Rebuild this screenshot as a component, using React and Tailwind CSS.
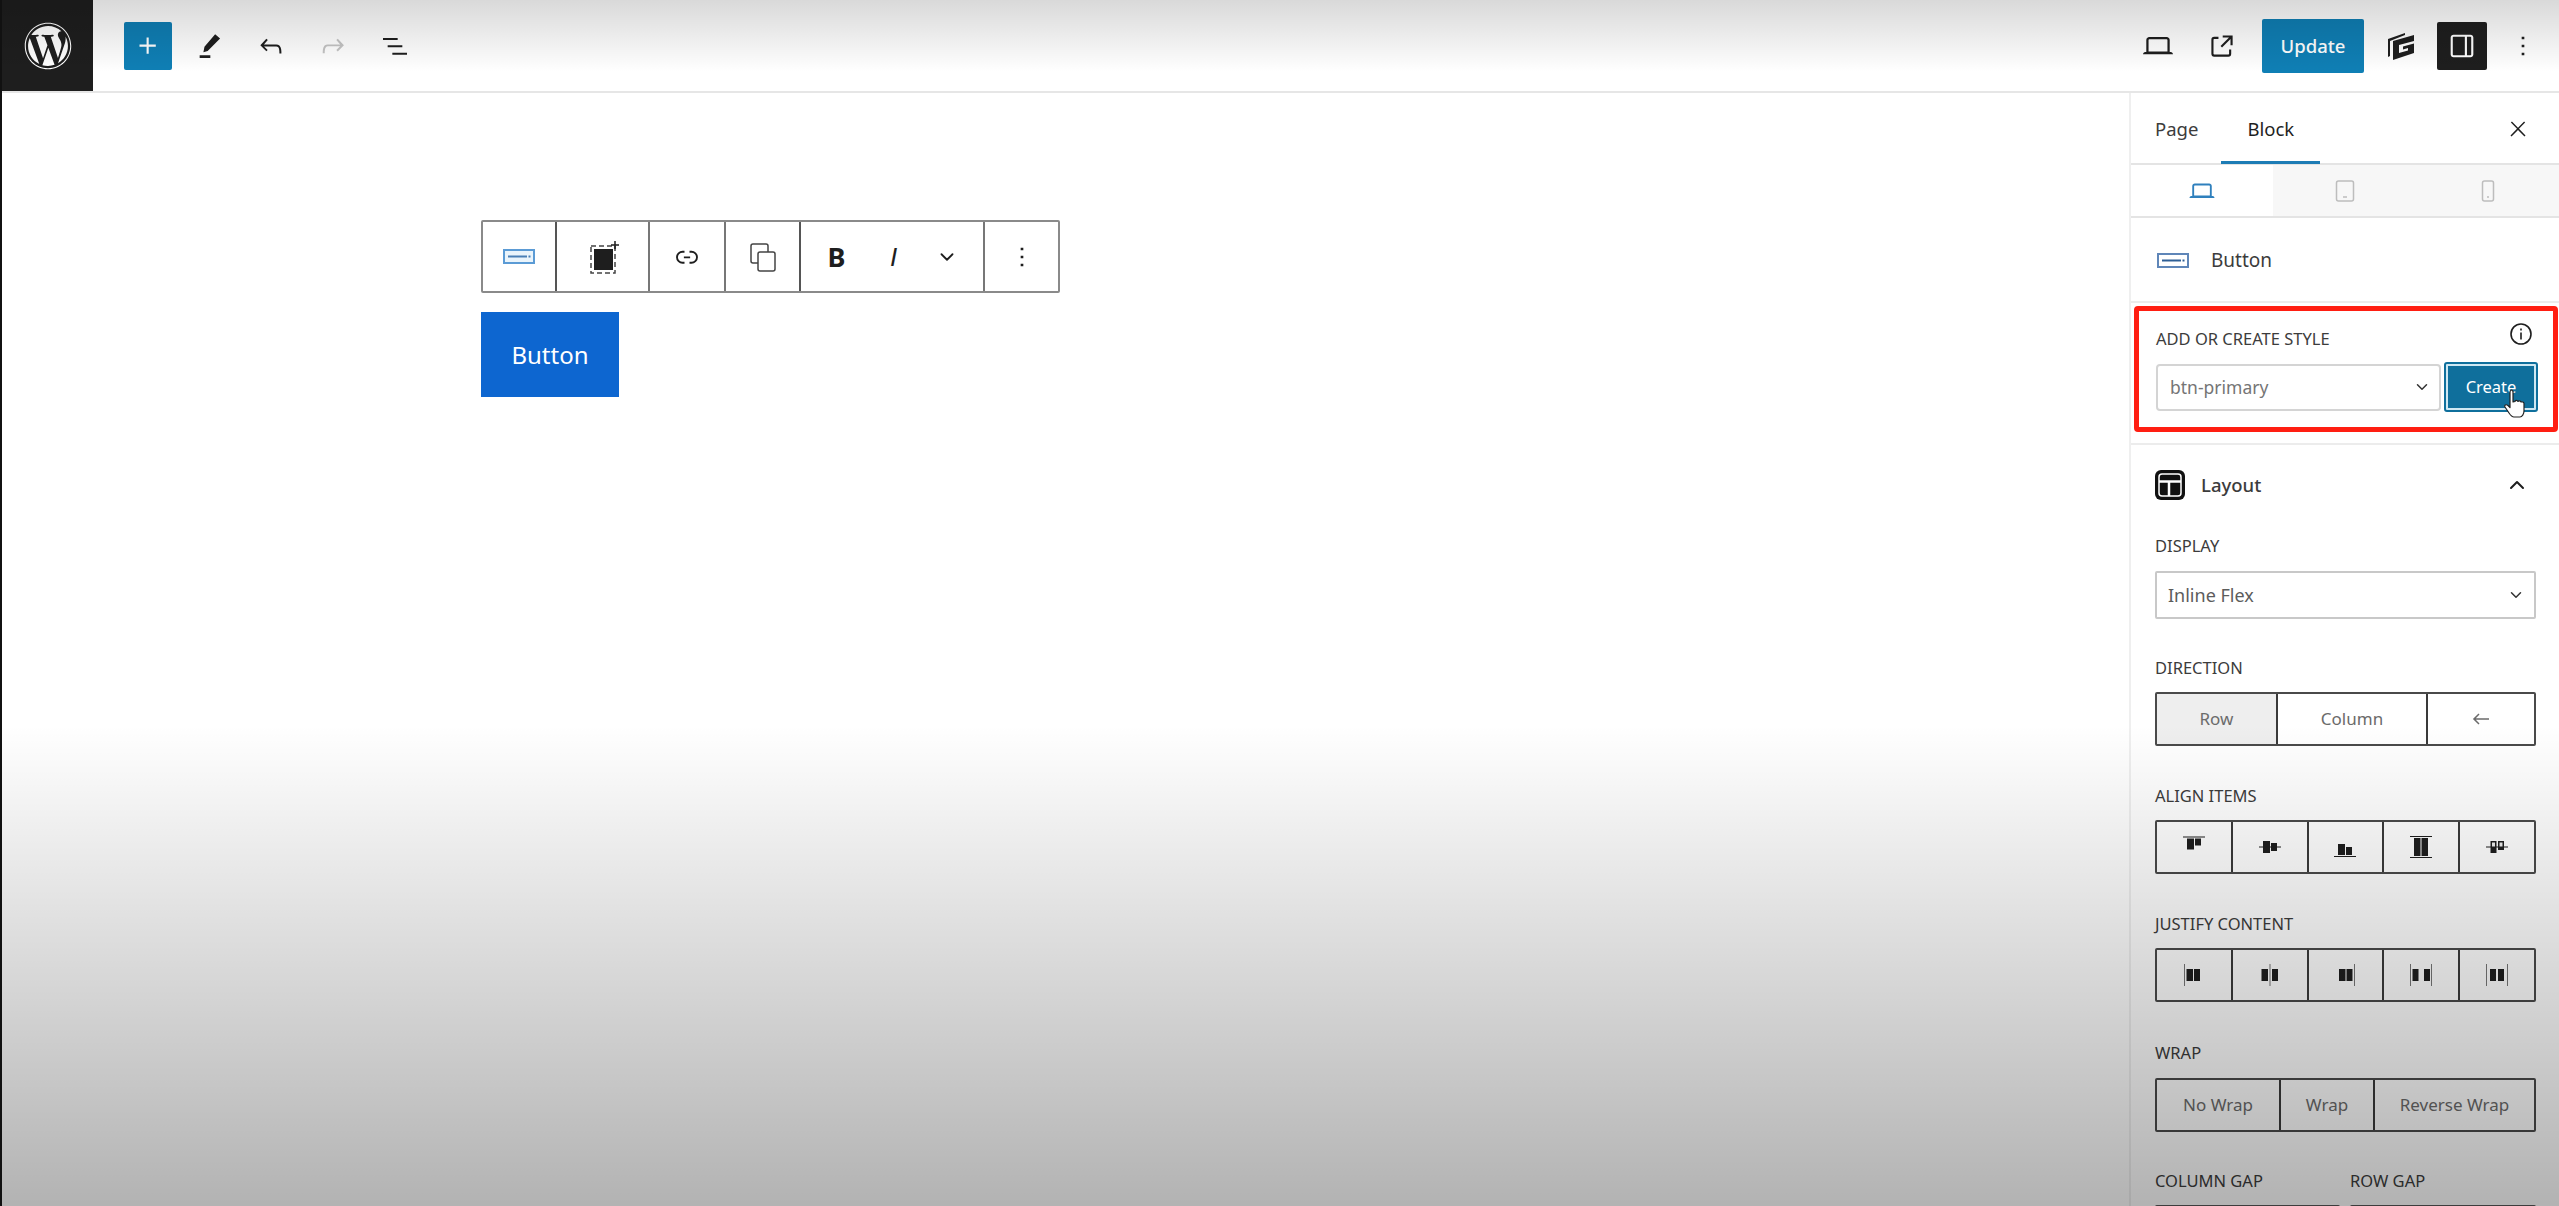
import { ChevronDown, ChevronUp } from 'lucide-react';
import { FaWordpress } from 'react-icons/fa';

const font = { fontFamily: '"Noto Sans", "Open Sans", sans-serif' };

function WpIcon({ d, size = 24, className = '' }) {
  return (
    <svg viewBox="0 0 24 24" width={size} height={size} className={className} fill="currentColor">
      <path d={d} />
    </svg>
  );
}

const paths = {
  plus: 'M11 12.5V17.5H12.5V12.5H17.5V11H12.5V6H11V11H6V12.5H11Z',
  undo: 'M18.3 11.7c-.6-.6-1.4-.9-2.3-.9H6.7l2.9-3.3-1.1-1-4.5 5L8.5 16l1-1-2.7-2.7H16c.5 0 .9.2 1.3.5 1 1 1 3.4 1 4.5v.3h1.5v-.2c0-1.5 0-4.3-1.5-5.7z',
  redo: 'M15.6 6.5l-1.1 1 2.9 3.3H8c-.9 0-1.7.3-2.3.9-1.4 1.5-1.4 4.2-1.4 5.6v.2h1.5v-.3c0-1.1 0-3.5 1-4.5.3-.3.7-.5 1.3-.5h9.2L14.5 15l1.1 1.1 4.6-4.6-4.6-5z',
  list: 'M3 6h11v1.5H3V6Zm3.5 5.5h11V13h-11v-1.5ZM21 17H10v1.5h11V17Z',
  pen: 'M16.6 3.2 20.3 6.4 11 15.8 7.8 16.6 8.6 12.6ZM5 19h8v2H5Z',
  more: 'M13 19h-2v-2h2v2zm0-6h-2v-2h2v2zm0-6h-2V5h2v2z',
  drawer: 'M18 4H6c-1.1 0-2 .9-2 2v12c0 1.1.9 2 2 2h12c1.1 0 2-.9 2-2V6c0-1.1-.9-2-2-2zm-4 14.5H6c-.3 0-.5-.2-.5-.5V6c0-.3.2-.5.5-.5h8v13zm4.5-.5c0 .3-.2.5-.5.5h-2.5v-13H18c.3 0 .5.2.5.5v12z',
  close: 'M13 11.8l6.1-6.3-1-1-6.1 6.2-6.1-6.2-1 1 6.1 6.3-6.5 6.7 1 1 6.5-6.6 6.5 6.6 1-1z',
  desktop: 'M20.5 16h-.7V8c0-1.1-.9-2-2-2H6.2c-1.1 0-2 .9-2 2v8h-.7c-.8 0-1.5.7-1.5 1.5h20c0-.8-.7-1.5-1.5-1.5zM5.7 8c0-.3.2-.5.5-.5h11.6c.3 0 .5.2.5.5v7.6H5.7V8z',
  external: 'M19.5 4.5h-7V6h4.44l-5.97 5.97 1.06 1.06L18 7.06v4.44h1.5v-7Zm-13 1a2 2 0 0 0-2 2v10a2 2 0 0 0 2 2h10a2 2 0 0 0 2-2v-3H17v3a.5.5 0 0 1-.5.5h-10a.5.5 0 0 1-.5-.5v-10a.5.5 0 0 1 .5-.5h3V5.5h-3Z',
  link: 'M10 17.389H8.444A5.194 5.194 0 1 1 8.444 7H10v1.5H8.444a3.694 3.694 0 0 0 0 7.389H10v1.5ZM14 7h1.556a5.194 5.194 0 0 1 0 10.39H14v-1.5h1.556a3.694 3.694 0 0 0 0-7.39H14V7Zm-4.5 6h5v-1.5h-5V13Z',
  arrowLeft: 'M20 11.2H6.8l3.7-3.7-1-1L3.9 12l5.6 5.5 1-1-3.7-3.7H20z',
};

function Shapes({ children, size = 24 }) {
  return (
    <svg viewBox="0 0 24 24" width={size} height={size} fill="#1e1e1e">
      {children}
    </svg>
  );
}

function ButtonIcon({ stroke, line, fill = 'none' }) {
  return (
    <svg viewBox="0 0 32 15" width="32" height="15">
      <rect x="1" y="1" width="30" height="13" fill={fill} stroke={stroke} strokeWidth="2" />
      <path d="M5 7.500h19" stroke={line} strokeWidth="2" />
      <rect x="25.500" y="6.500" width="2" height="2" fill={line} />
    </svg>
  );
}

const alignIcons = [
  <Shapes key="a1"><rect x="1" y="1.5" width="22" height="1" /><rect x="5" y="3.5" width="7" height="11" /><rect x="13" y="3.5" width="6" height="7" /></Shapes>,
  <Shapes key="a2"><rect x="1" y="11.5" width="22" height="1" /><rect x="5" y="6" width="7" height="12" /><rect x="13" y="8" width="6" height="8" /></Shapes>,
  <Shapes key="a3"><rect x="1" y="21" width="22" height="1" /><rect x="5" y="9" width="7" height="11" /><rect x="13" y="12" width="6" height="8" /></Shapes>,
  <Shapes key="a4"><rect x="1" y="1" width="22" height="1" /><rect x="1" y="22" width="22" height="1" /><rect x="5" y="3" width="6.5" height="18" /><rect x="12.5" y="3" width="6.5" height="18" /></Shapes>,
  <Shapes key="a5"><rect x="1" y="11.5" width="22" height="1" /><rect x="5.5" y="6" width="6" height="12" /><rect x="13" y="6" width="6" height="9" /><rect x="7" y="7.5" width="3" height="4" fill="#eee" /><rect x="14.5" y="7.5" width="3" height="4" fill="#eee" /></Shapes>,
];

const justifyIcons = [
  <Shapes key="j1"><rect x="2" y="1" width="1" height="22" fill="#777" /><rect x="4.5" y="6" width="6.5" height="12" /><rect x="12" y="6" width="6" height="12" /></Shapes>,
  <Shapes key="j2"><rect x="11.5" y="1" width="1" height="22" fill="#777" /><rect x="3.5" y="6" width="6.5" height="12" /><rect x="14" y="6" width="6" height="12" /></Shapes>,
  <Shapes key="j3"><rect x="21" y="1" width="1" height="22" fill="#777" /><rect x="6" y="6" width="6.5" height="12" /><rect x="13.5" y="6" width="6" height="12" /></Shapes>,
  <Shapes key="j4"><rect x="1" y="1" width="1" height="22" fill="#777" /><rect x="22" y="1" width="1" height="22" fill="#777" /><rect x="3.5" y="6" width="6" height="12" /><rect x="15" y="6" width="6" height="12" /></Shapes>,
  <Shapes key="j5"><rect x="1" y="1" width="1" height="22" fill="#777" /><rect x="22" y="1" width="1" height="22" fill="#777" /><rect x="5" y="6" width="6" height="12" /><rect x="13" y="6" width="6" height="12" /></Shapes>,
];

function Label({ children, className = '' }) {
  return <div className={`text-[16.5px] leading-[20px] text-[#3c3c3c] ${className}`}>{children}</div>;
}

function Group({ children }) {
  return <div className="flex h-[54px] rounded-[2px] border-2 border-[#4a4a4a] divide-x-2 divide-[#3a3a3a]">{children}</div>;
}

function Cell({ children, className = '' }) {
  return <div className={`flex items-center justify-center text-[17px] text-[#6b6b6b] ${className}`}>{children}</div>;
}

function ToolCell({ children, className = '' }) {
  return <div className={`flex h-full items-center justify-center ${className}`}>{children}</div>;
}

export default function App() {
  return (
    <div className="relative flex h-[1206px] w-[2559px] flex-col overflow-hidden border-l-2 border-[#111] bg-white" style={font}>
      {/* top bar */}
      <header className="flex h-[93px] shrink-0 items-center border-b-2 border-[#e6e6e6] bg-white">
        <div className="flex h-[91px] w-[91px] shrink-0 items-center justify-center bg-[#1e1e1e] text-white">
          <FaWordpress size={48} />
        </div>
        <div className="ml-[31px] flex h-[48px] w-[48px] items-center justify-center rounded-[2px] bg-[#0f7fb5] text-white">
          <WpIcon d={paths.plus} size={34} />
        </div>
        <div className="ml-[21px] flex items-center gap-[30px] text-[#1e1e1e]">
          <WpIcon d={paths.pen} size={32} />
          <WpIcon d={paths.undo} size={32} />
          <WpIcon d={paths.redo} size={32} className="text-[#c4c4c4]" />
          <WpIcon d={paths.list} size={32} />
        </div>
        <div className="ml-auto flex items-center text-[#1e1e1e]">
          <WpIcon d={paths.desktop} size={36} />
          <WpIcon d={paths.external} size={34} className="ml-[29px]" />
          <div className="ml-[23px] flex h-[54px] w-[102px] items-center justify-center rounded-[2px] bg-[#0f7fb5] text-[18.5px] font-medium text-white">
            Update
          </div>
          <svg viewBox="0 0 28 30" width="28" height="30" className="ml-[23px]" fill="#1e1e1e">
            <path d="M1 8 18 2V4L3 10V25L1 26Z" />
            <path d="M6 10 27 4V10L12 14V22L21 19.500V17L16 18.500V15.500L27 12.500V22L6 29Z" />
          </svg>
          <div className="ml-[22px] flex h-[48px] w-[50px] items-center justify-center rounded-[2px] bg-[#1e1e1e] text-white">
            <WpIcon d={paths.drawer} size={34} />
          </div>
          <WpIcon d={paths.more} size={32} className="ml-[20px] mr-[20px]" />
        </div>
      </header>

      <div className="flex min-h-0 flex-1">
        {/* canvas */}
        <main className="min-w-0 flex-1 pl-[479px] pt-[127px]">
          <div className="flex h-[73px] w-[579px] rounded-[2px] border-2 border-[#8a8a8a] bg-white text-[#1e1e1e]">
            <ToolCell className="w-[74px] border-r-2 border-[#555]">
              <ButtonIcon stroke="#5b9bd5" line="#4a7fb5" fill="#eaf4fb" />
            </ToolCell>
            <ToolCell className="w-[93px] border-r-2 border-[#777]">
              <svg viewBox="0 0 34 34" width="34" height="34">
                <rect x="5" y="6" width="24" height="27" fill="none" stroke="#444" strokeWidth="1.500" strokeDasharray="5 3" />
                <rect x="8" y="9" width="19" height="21" fill="#1e1e1e" />
                <path d="M29 1v8M25 5h8" stroke="#1e1e1e" strokeWidth="1.500" />
              </svg>
            </ToolCell>
            <ToolCell className="w-[76px] border-r-2 border-[#777]">
              <WpIcon d={paths.link} size={30} />
            </ToolCell>
            <ToolCell className="w-[75px] border-r-2 border-[#555]">
              <svg viewBox="0 0 28 32" width="28" height="32" fill="none" stroke="#444" strokeWidth="1.500">
                <rect x="2" y="3" width="17" height="19" rx="2" />
                <rect x="9" y="11" width="17" height="19" rx="2" fill="#fff" />
              </svg>
            </ToolCell>
            <ToolCell className="w-[184px] border-r-2 border-[#777] pr-[12px]">
              <span className="w-[57px] text-center text-[27px] font-bold leading-none">B</span>
              <span className="w-[57px] text-center text-[26px] italic leading-none" style={{ fontFamily: '"Liberation Sans", sans-serif' }}>I</span>
              <ChevronDown size={22} strokeWidth={2} className="ml-[14px] mr-[6px]" />
            </ToolCell>
            <ToolCell className="flex-1">
              <WpIcon d={paths.more} size={32} />
            </ToolCell>
          </div>
          <div className="mt-[19px] flex h-[85px] w-[138px] items-center justify-center bg-[#0d66d0] text-[24px] text-white">
            Button
          </div>
        </main>

        {/* sidebar */}
        <aside className="w-[430px] shrink-0 border-l-2 border-[#efefef] bg-white text-[#1e1e1e]">
          <div className="flex h-[72px] items-center border-b-2 border-[#e4e4e4] pl-[24px] pr-[29px] pt-[2px] text-[18.5px]">
            <span className="text-[#3c3c3c]">Page</span>
            <span className="relative ml-[49px]">
              Block
              <span className="absolute -bottom-[21px] -left-[26px] -right-[26px] h-[3px] bg-[#1d7cb5]" />
            </span>
            <WpIcon d={paths.close} size={24} className="ml-auto" />
          </div>

          <div className="flex h-[53px] border-b-2 border-[#e4e4e4]">
            <div className="flex w-[142px] items-center justify-center text-[#2f80bd]">
              <WpIcon d={paths.desktop} size={30} />
            </div>
            <div className="flex flex-1 items-center justify-center bg-[#f7f7f7] text-[#bdbdbd]">
              <svg viewBox="0 0 20 24" width="20" height="24" fill="none" stroke="currentColor" strokeWidth="1.500">
                <rect x="1.500" y="2" width="17" height="20" rx="2" />
                <path d="M8 18h4" />
              </svg>
            </div>
            <div className="flex flex-1 items-center justify-center bg-[#f7f7f7] text-[#bdbdbd]">
              <svg viewBox="0 0 14 24" width="14" height="24" fill="none" stroke="currentColor" strokeWidth="1.500">
                <rect x="1.500" y="2" width="11" height="20" rx="2" />
                <path d="M6 18h2" />
              </svg>
            </div>
          </div>

          <div className="flex h-[85px] items-center gap-[22px] border-b-2 border-[#ececec] pl-[26px] pt-[2px] text-[19px] text-[#3c3c3c]">
            <ButtonIcon stroke="#5f86b8" line="#2f5f95" />
            Button
          </div>

          {/* style picker */}
          <section className="relative h-[142px] border-b-2 border-[#ececec] px-[25px] pt-[26px]">
            <Label>ADD OR CREATE STYLE</Label>
            <svg viewBox="0 0 24 24" width="24" height="24" fill="none" stroke="#1e1e1e" strokeWidth="1.600" className="absolute right-[26px] top-[19px]">
              <circle cx="12" cy="12" r="10" />
              <path d="M12 10.500v7M12 6.500v2" />
            </svg>
            <div className="mt-[13px] flex items-center gap-[3px]">
              <div className="flex h-[47px] w-[285px] shrink-0 items-center justify-between rounded-[4px] border-2 border-[#d4d4d4] pl-[12px] pr-[8px] text-[17.5px] text-[#757575]">
                btn-primary
                <ChevronDown size={18} strokeWidth={2} className="text-[#333]" />
              </div>
              <div className="relative flex h-[50px] w-[94px] shrink-0 items-center justify-center rounded-[3px] border-2 border-[#0f6f9c] bg-[#0f6f9c] text-[16.5px] text-white outline-2 -outline-offset-4 outline-[#cfe8f3]">
                Create
                <svg viewBox="0 0 28 32" width="28" height="32" className="absolute left-[56px] top-[24px]" fill="#fff" stroke="#222" strokeWidth="1.200" strokeLinejoin="round">
                  <path d="M9 2c1.500 0 2 1 2 2v10l2-.5c0-1.500 2.500-1.500 3 0 .5-1 2.500-1 3 .5 1-.5 3 0 3 1.500V23c0 3-2 6-4 6h-6c-2 0-3-1-5-4l-4-6c-1-2 1-3 3-1.500l2 2V4c0-1 1-2 2-2Z" />
                </svg>
              </div>
            </div>
            <div className="pointer-events-none absolute left-[3px] right-[1px] top-[3px] h-[126px] rounded-[4px] border-[5px] border-[#ff1e12]" />
          </section>

          {/* layout */}
          <section className="pl-[24px] pr-[23px]">
            <div className="flex h-[79px] items-center">
              <svg viewBox="0 0 30 30" width="30" height="30">
                <rect x="0" y="0" width="30" height="30" rx="6" fill="#111" />
                <rect x="4" y="4" width="22" height="22" rx="3" fill="#111" stroke="#fff" strokeWidth="1.500" />
                <path d="M4 11.500h22M14 11.500V26" stroke="#fff" strokeWidth="2.500" />
              </svg>
              <span className="ml-[16px] text-[18.5px] font-medium text-[#3c3c3c]">Layout</span>
              <ChevronUp size={24} strokeWidth={2} className="ml-auto mr-[7px]" />
            </div>

            <Label className="mt-[12px]">DISPLAY</Label>
            <div className="mt-[15px] flex h-[48px] items-center justify-between rounded-[2px] border-2 border-[#c8c8c8] pl-[11px] pr-[9px] text-[18px] text-[#5c5c5c]">
              Inline Flex
              <ChevronDown size={18} strokeWidth={2} className="text-[#333]" />
            </div>

            <Label className="mt-[39px]">DIRECTION</Label>
            <div className="mt-[14px]">
              <Group>
                <Cell className="w-[121px] bg-[#eeeeee]">Row</Cell>
                <Cell className="w-[150px]">Column</Cell>
                <Cell className="flex-1 text-[#1e1e1e]"><WpIcon d={paths.arrowLeft} size={24} /></Cell>
              </Group>
            </div>

            <Label className="mt-[40px]">ALIGN ITEMS</Label>
            <div className="mt-[14px]">
              <Group>
                {alignIcons.map((icon, i) => <Cell key={i} className="flex-1">{icon}</Cell>)}
              </Group>
            </div>

            <Label className="mt-[40px]">JUSTIFY CONTENT</Label>
            <div className="mt-[14px]">
              <Group>
                {justifyIcons.map((icon, i) => <Cell key={i} className="flex-1">{icon}</Cell>)}
              </Group>
            </div>

            <Label className="mt-[41px]">WRAP</Label>
            <div className="mt-[15px]">
              <Group>
                <Cell className="w-[124px]">No Wrap</Cell>
                <Cell className="w-[94px]">Wrap</Cell>
                <Cell className="flex-1">Reverse Wrap</Cell>
              </Group>
            </div>

            <div className="mt-[39px] flex">
              <div className="w-[195px]">
                <Label>COLUMN GAP</Label>
                <div className="mt-[14px] h-[40px] w-[185px] rounded-[2px] border-2 border-[#555]" />
              </div>
              <div className="flex-1">
                <Label>ROW GAP</Label>
                <div className="mt-[14px] h-[40px] rounded-[2px] border-2 border-[#555]" />
              </div>
            </div>
          </section>
        </aside>
      </div>

      {/* video fade over the page */}
      <div className="pointer-events-none absolute inset-x-0 top-0 h-[72px] bg-linear-to-b from-black/15 to-black/0" />
      <div className="pointer-events-none absolute inset-x-0 bottom-0 top-[725px] bg-linear-to-b from-black/0 to-black/30" />
    </div>
  );
}
